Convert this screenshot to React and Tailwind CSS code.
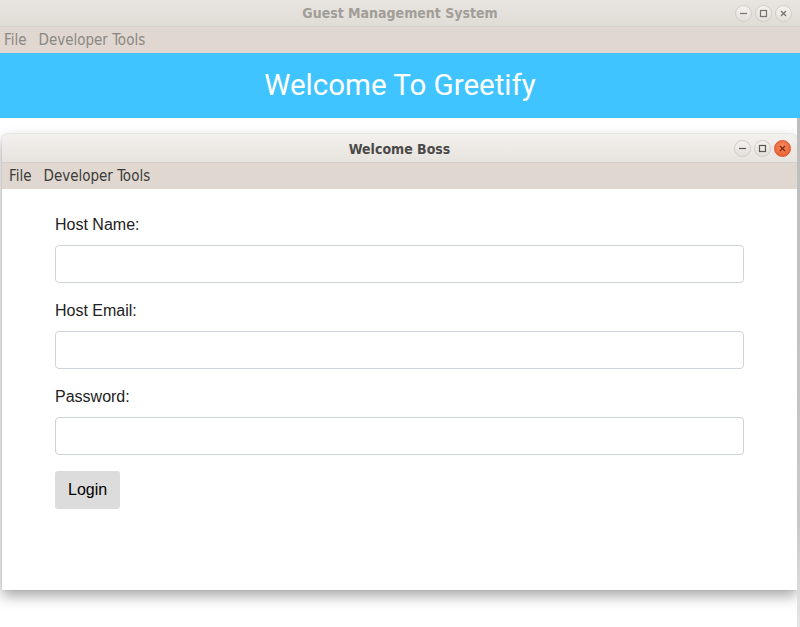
const uiFont = { fontFamily: '"DejaVu Sans Condensed", "Open Sans", sans-serif' };

const WinButton = ({ kind, active, close }) => (
  <span
    className={
      close
        ? "flex h-[17px] w-[17px] items-center justify-center rounded-full border border-[#d9542c] bg-[radial-gradient(circle_at_50%_35%,#f58a5e,#e8582c)]"
        : "flex h-[17px] w-[17px] items-center justify-center rounded-full border border-[#d2ccc6] bg-[linear-gradient(#f4f2ef,#e4e0dc)]"
    }
  >
    <svg width="9" height="9" viewBox="0 0 9 9" fill="none" stroke={close ? "#7a2a12" : active ? "#5a5652" : "#77726d"} strokeWidth="1.2">
      {kind === "min" && <line x1="1" y1="4.5" x2="8" y2="4.5" />}
      {kind === "max" && <rect x="1.5" y="1.5" width="6" height="6" />}
      {kind === "close" && (
        <>
          <line x1="2" y1="2" x2="7" y2="7" />
          <line x1="7" y1="2" x2="2" y2="7" />
        </>
      )}
    </svg>
  </span>
);

const Field = ({ label, type = "text" }) => (
  <div className="flex flex-col">
    <label className="text-[16px] leading-[18px] text-[#222]">{label}</label>
    <input
      type={type}
      className="mt-[11px] h-[38px] w-full rounded-[4px] border border-[#ced4da] bg-white px-3 outline-none"
    />
  </div>
);

export default function App() {
  return (
    <div className="relative h-[627px] w-[800px] overflow-hidden bg-white">
      {/* main window chrome */}
      <div className="relative flex h-[27px] items-center justify-center border-b border-[#d6d0ca] bg-[linear-gradient(#e8e5e1,#e0dcd6)]">
        <span className="text-[14px] font-bold text-[#a19d98]" style={uiFont}>
          Guest Management System
        </span>
        <div className="absolute right-[8px] top-[5px] flex gap-[3px]">
          <WinButton kind="min" />
          <WinButton kind="max" />
          <WinButton kind="close" />
        </div>
      </div>
      <div className="flex h-[26px] items-center gap-[12px] bg-[#dfd7d0] px-[4px] text-[15px] text-[#8c8782]" style={uiFont}>
        <span>File</span>
        <span>Developer Tools</span>
      </div>
      <div className="flex h-[65px] items-center justify-center bg-[#40c4ff]">
        <h1 className="text-[29.5px] text-white" style={{ fontFamily: "Roboto, sans-serif" }}>
          Welcome To Greetify
        </h1>
      </div>

      {/* right edge shade of the page window */}
      <div className="absolute bottom-0 right-0 top-[118px] w-[3px] bg-[linear-gradient(#bdbdbd,#c8c8c8_80%,#e6e6e6)]" />

      {/* dialog window */}
      <div className="ml-[2px] mt-[16px] w-[795px] rounded-t-[6px] shadow-[0_6px_14px_rgba(0,0,0,0.35),0_0_1px_rgba(0,0,0,0.4)]">
        <div className="relative flex h-[29px] items-center justify-center rounded-t-[6px] border-b border-[#d6cfc8] bg-[linear-gradient(#f3f1ee,#e7e3de)] pt-[2px]">
          <span className="text-[14px] font-bold text-[#4c4a48]" style={uiFont}>
            Welcome Boss
          </span>
          <div className="absolute right-[6px] top-[6px] flex gap-[3px]">
            <WinButton kind="min" active />
            <WinButton kind="max" active />
            <WinButton kind="close" active close />
          </div>
        </div>
        <div className="flex h-[26px] items-center gap-[12px] bg-[#dfd7d0] px-[7px] text-[15px] text-[#3c3b39]" style={uiFont}>
          <span>File</span>
          <span>Developer Tools</span>
        </div>
        <div
          className="flex h-[401px] flex-col gap-[19px] bg-white px-[53px] pt-[27px]"
          style={{ fontFamily: '"Liberation Sans", Arial, sans-serif' }}
        >
          <Field label="Host Name:" />
          <Field label="Host Email:" type="email" />
          <Field label="Password:" type="password" />
          <div className="-mt-[3px]">
            <button className="h-[38px] rounded-[3px] bg-[#dcdcdc] px-[13px] text-[16px] text-black">
              Login
            </button>
          </div>
        </div>
      </div>
    </div>
  );
}
